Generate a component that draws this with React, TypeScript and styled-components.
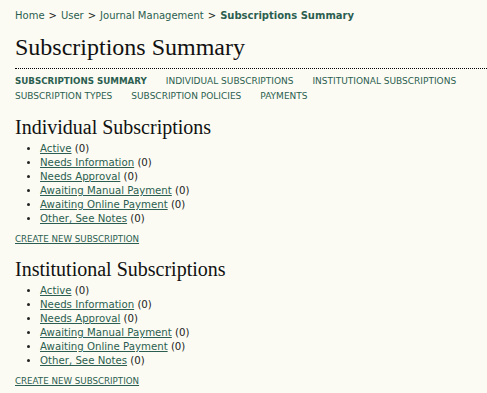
import styled, { createGlobalStyle } from 'styled-components';

const GlobalStyle = createGlobalStyle`
  html, body {
    margin: 0;
    padding: 0;
    background: #fbfbf3;
  }
  body {
    font-family: Verdana, "DejaVu Sans", sans-serif;
    color: #222;
    overflow: hidden;
  }
`;

const statuses = [
  'Active',
  'Needs Information',
  'Needs Approval',
  'Awaiting Manual Payment',
  'Awaiting Online Payment',
  'Other, See Notes',
];

const menu = [
  ['Subscriptions Summary', 'Individual Subscriptions', 'Institutional Subscriptions'],
  ['Subscription Types', 'Subscription Policies', 'Payments'],
];

const App = () => {
  return (
    <Page>
      <GlobalStyle />
      <Breadcrumb>
        <Crumb href="#">Home</Crumb>
        <Sep>&gt;</Sep>
        <Crumb href="#">User</Crumb>
        <Sep>&gt;</Sep>
        <Crumb href="#">Journal Management</Crumb>
        <Sep>&gt;</Sep>
        <Crumb href="#" $current>
          Subscriptions Summary
        </Crumb>
      </Breadcrumb>
      <Title>Subscriptions Summary</Title>
      <Menu>
        {menu.map((row, i) => (
          <MenuRow key={i}>
            {row.map((item, j) => (
              <MenuItem key={item} href="#" $current={i === 0 && j === 0}>
                {item}
              </MenuItem>
            ))}
          </MenuRow>
        ))}
      </Menu>

      {['Individual Subscriptions', 'Institutional Subscriptions'].map((section) => (
        <Section key={section}>
          <Heading>{section}</Heading>
          <StatusList>
            {statuses.map((s) => (
              <li key={s}>
                <StatusLink href="#">{s}</StatusLink> (0)
              </li>
            ))}
          </StatusList>
          <Action href="#">Create New Subscription</Action>
        </Section>
      ))}
    </Page>
  );
};

export default App;

const Page = styled.div`
  padding: 6px 0 0 15px;
`;

const Breadcrumb = styled.div`
  font-size: 10px;
  line-height: 20px;
  display: flex;
  gap: 4px;
  white-space: nowrap;
`;

const Crumb = styled.a<{ $current?: boolean }>`
  color: #2b5e50;
  text-decoration: none;
  font-weight: ${(p) => (p.$current ? 'bold' : 'normal')};
`;

const Sep = styled.span`
  color: #222;
`;

const Title = styled.h1`
  font-family: Georgia, "Liberation Serif", serif;
  font-weight: normal;
  font-size: 24px;
  line-height: 30px;
  margin: 6px 0 0;
  color: #111;
`;

const Menu = styled.div`
  margin-top: 6px;
  border-top: 1px dotted #000;
  padding-top: 5px;
  margin-right: -10px;
`;

const MenuRow = styled.div`
  display: flex;
  align-items: baseline;
  gap: 19px;
  font-size: 9px;
  line-height: 15px;
  white-space: nowrap;
`;

const MenuItem = styled.a<{ $current?: boolean }>`
  color: #2b5e50;
  text-decoration: none;
  text-transform: uppercase;
  font-weight: ${(p) => (p.$current ? 'bold' : 'normal')};
  font-size: ${(p) => (p.$current ? '8.7px' : '9px')};
`;

const Section = styled.div`
  margin-top: 11px;
`;

const Heading = styled.h2`
  font-family: Georgia, "Liberation Serif", serif;
  font-weight: normal;
  font-size: 20px;
  line-height: 24px;
  margin: 0;
  color: #111;
`;

const StatusList = styled.ul`
  margin: 3px 0 0;
  padding-left: 25px;
  font-size: 10.2px;
  line-height: 14px;
  list-style: disc;
`;

const StatusLink = styled.a`
  color: #2b5e50;
`;

const Action = styled.a`
  display: inline-block;
  margin-top: 7px;
  font-size: 8.7px;
  line-height: 12px;
  color: #2b5e50;
  text-transform: uppercase;
`;
